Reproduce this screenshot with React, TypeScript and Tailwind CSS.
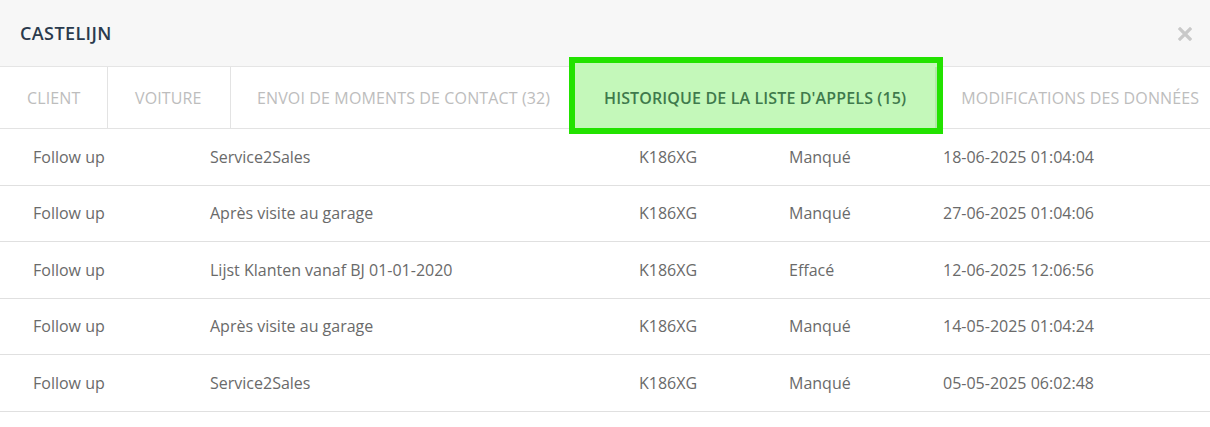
const tabs = [
  { label: "CLIENT", cls: "w-[108px] pl-[27px] border-r" },
  { label: "VOITURE", cls: "w-[123px] pl-[27px] border-r" },
  { label: "ENVOI DE MOMENTS DE CONTACT (32)", cls: "w-[344px] pl-[26px]" },
  { label: "HISTORIQUE DE LA LISTE D'APPELS (15)", active: true, cls: "" },
  { label: "MODIFICATIONS DES DONNÉES", cls: "pl-[24px]" },
]

const rows = [
  ["Follow up", "Service2Sales", "K186XG", "Manqué", "18-06-2025 01:04:04"],
  ["Follow up", "Après visite au garage", "K186XG", "Manqué", "27-06-2025 01:04:06"],
  ["Follow up", "Lijst Klanten vanaf BJ 01-01-2020", "K186XG", "Effacé", "12-06-2025 12:06:56"],
  ["Follow up", "Après visite au garage", "K186XG", "Manqué", "14-05-2025 01:04:24"],
  ["Follow up", "Service2Sales", "K186XG", "Manqué", "05-05-2025 06:02:48"],
]

export default function App() {
  return (
    <div className="w-[1210px] h-[427px] bg-white overflow-hidden font-['Open_Sans',sans-serif]">
      {/* header */}
      <div className="h-[67px] bg-[#f7f7f7] border-b border-[#e5e5e5] flex items-center justify-between pl-5 pr-[18px]">
        <h2 className="text-[18px] font-semibold text-[#2a3a4d] tracking-[0.4px]">CASTELIJN</h2>
        <svg width="14" height="14" viewBox="0 0 14 14" className="mt-[1px]">
          <path d="M2 2 L12 12 M12 2 L2 12" stroke="#c9c9c9" strokeWidth="3.2" strokeLinecap="square" />
        </svg>
      </div>

      {/* tabs */}
      <div className="h-[62px] flex border-b border-[#e3e3e3] tracking-[0.13px]">
        {tabs.map((t) =>
          t.active ? (
            <div key={t.label} className="relative shrink-0 flex items-center pl-[29px] pr-[31px]">
              <span className="absolute -left-[6px] -right-[6px] -top-[10px] -bottom-[6px] border-[6px] border-[#22e200] bg-[#c4f8ba]" />
              <span className="absolute left-0 right-0 top-0 bottom-0 border-r-2 border-[#b2e8a8]" />
              <span className="relative text-[16px] font-semibold text-[#3f7a4c] whitespace-nowrap">{t.label}</span>
            </div>
          ) : (
            <div
              key={t.label}
              className={`${t.cls} shrink-0 flex items-center border-[#e3e3e3] text-[16px] text-[#bdbdbd] whitespace-nowrap`}
            >
              {t.label}
            </div>
          )
        )}
      </div>

      {/* table */}
      <div>
        {rows.map((r, i) => (
          <div
            key={i}
            className="h-[56.5px] flex items-center border-b border-[#e0e0e0] text-[16px] text-[#6a6a6a]"
          >
            <div className="w-[210px] pl-[33px]">{r[0]}</div>
            <div className="w-[429px]">{r[1]}</div>
            <div className="w-[150px]">{r[2]}</div>
            <div className="w-[154px]">{r[3]}</div>
            <div className="flex-1">{r[4]}</div>
          </div>
        ))}
      </div>
    </div>
  )
}
